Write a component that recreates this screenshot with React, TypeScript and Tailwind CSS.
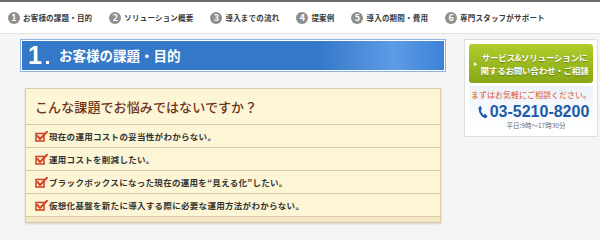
import React from "react";

const navItems = [
  "お客様の課題・目的",
  "ソリューション概要",
  "導入までの流れ",
  "提案例",
  "導入の期間・費用",
  "専門スタッフがサポート",
];

const issues = [
  "現在の運用コストの妥当性がわからない。",
  "運用コストを削減したい。",
  "ブラックボックスになった現在の運用を“見える化”したい。",
  "仮想化基盤を新たに導入する際に必要な運用方法がわからない。",
];

const CheckIcon = () => (
  <svg width="13" height="11" viewBox="0 0 13 11" className="shrink-0">
    <rect x="1" y="2.5" width="8" height="7.5" fill="none" stroke="#d0482a" strokeWidth="1.6" />
    <path d="M2.5 5 L5 8 L12 0.8" fill="none" stroke="#d0482a" strokeWidth="2" strokeLinecap="round" strokeLinejoin="round" />
  </svg>
);

const PhoneIcon = () => (
  <svg width="11" height="16" viewBox="0 0 13 17" className="shrink-0">
    <path
      d="M4 1 L6 5 L4.5 6.5 C5 9 6.5 11 8 12 L9.5 10.5 L12.5 13.5 L10.5 16 C5 15 1.5 9 2 3 Z"
      fill="#1d5ba8"
    />
  </svg>
);

export default function App() {
  return (
    <div
      className="w-[600px] h-[240px] overflow-hidden bg-[#f5f5f5]"
      style={{ fontFamily: '"Noto Sans CJK JP", "Noto Sans", sans-serif' }}
    >
      {/* グローバルナビ */}
      <div className="h-[34px] bg-white border-t-2 border-[#6b6b6b] border-b border-b-[#e2e2e2] flex items-center pl-[8px] gap-[17px]">
        {navItems.map((label, i) => (
          <div key={label} className="flex items-center gap-[3px]">
            <span className="w-[12px] h-[12px] rounded-full bg-[#8e8e8e] text-white text-[9px] leading-none flex items-center justify-center font-bold">
              {i + 1}
            </span>
            <span className="text-[7.5px] font-bold text-[#3a3a3a] tracking-[0.2px] whitespace-nowrap">
              {label}
            </span>
          </div>
        ))}
      </div>

      <div className="flex pt-[5px]">
        {/* 左カラム */}
        <div className="w-[426px] ml-[20px] shrink-0">
          <div className="h-[33px] border border-[#8fb3e0] p-[1px] bg-white">
            <div className="h-full flex items-center bg-gradient-to-r from-[#3478c8] from-70% via-[#5d9be6] via-88% to-[#3c82d6] pl-[6px]">
              <span
                className="text-white text-[25px] font-bold leading-none"
                style={{ fontFamily: '"Liberation Sans", Arial, sans-serif' }}
              >
                1
              </span>
              <span className="w-[3px] h-[3px] bg-white mt-[14px] ml-[4px]" />
              <span className="text-white text-[13.5px] font-bold ml-[10px]">お客様の課題・目的</span>
            </div>
          </div>

          <div className="mt-[16px] ml-[5px] w-[416px] bg-[#fcf5d6] border border-[#dcc9a6] shadow-[0_1px_2px_rgba(0,0,0,0.15)]">
            <div className="h-[36px] flex items-center pl-[9px] border-b border-[#dcc9a6]">
              <span className="text-[13px] font-medium text-[#6e3419] tracking-[0.1px]">
                こんな課題でお悩みではないですか？
              </span>
            </div>
            {issues.map((t) => (
              <div key={t} className="h-[23px] flex items-center pl-[9px] gap-[1px] border-b border-[#dcc9a6]">
                <CheckIcon />
                <span className="text-[8.5px] font-bold text-[#333] tracking-[0.3px] whitespace-nowrap">{t}</span>
              </div>
            ))}
            <div className="h-[5px] bg-[#f3e6c2]" />
          </div>
        </div>

        {/* 右カラム */}
        <div className="ml-[18px] w-[134px] shrink-0 bg-white border border-[#dedede] p-[4px] h-[98px]">
          <div className="h-[39px] rounded-[3px] bg-gradient-to-b from-[#b0cd2c] to-[#86a812] flex items-center justify-center gap-[3px]">
            <span className="text-white text-[4px] leading-none">▶</span>
            <div className="text-white text-[8.5px] font-bold leading-[13px] text-center whitespace-nowrap tracking-[-0.2px] [text-shadow:0_1px_1px_rgba(0,0,0,0.3)]">
              <div>サービス&amp;ソリューションに</div>
              <div>関するお問い合わせ・ご相談</div>
            </div>
          </div>
          <div className="bg-gradient-to-b from-[#edf2fa] to-white mt-[3px] flex flex-col items-center pt-[3px]">
            <div className="text-[8px] text-[#d9542e] leading-[12px] whitespace-nowrap">
              まずはお気軽にご相談ください。
            </div>
            <div className="flex items-center gap-[2px] mt-[1px] ml-[4px]">
              <PhoneIcon />
              <span
                className="text-[16px] font-bold text-[#1d5ba8] leading-[19px]"
                style={{ fontFamily: '"Liberation Sans", Arial, sans-serif' }}
              >
                03-5210-8200
              </span>
            </div>
            <div className="text-[6.5px] text-[#666] leading-[9px] ml-[10px] whitespace-nowrap">平日:9時～17時30分</div>
          </div>
        </div>
      </div>
    </div>
  );
}
